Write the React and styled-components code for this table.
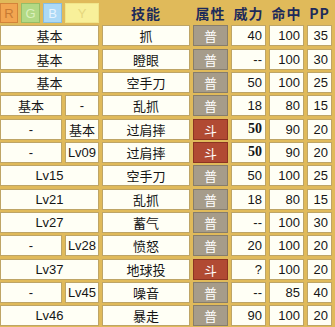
import React from 'react';
import styled, { createGlobalStyle } from 'styled-components';

const GlobalStyle = createGlobalStyle`
  html, body {
    margin: 0;
    padding: 0;
    background: #e0ba5a;
  }
  body {
    font-family: "Liberation Sans", "Noto Sans CJK SC", sans-serif;
  }
`;

const Sheet = styled.div`
  width: 335px;
  height: 327px;
  box-sizing: border-box;
  padding-top: 3px;
  background: #e0ba5a;
  display: grid;
  grid-template-columns: 18px 19px 19px 34px 88px 35px 35px 35px 25px;
  grid-template-rows: 20px repeat(13, 21px);
  column-gap: 3px;
  row-gap: 2.33px;
  overflow: hidden;
`;

const swatches = {
  R: { bg: '#f2a550', line: '#d3843a', ink: '#c77a34' },
  G: { bg: '#b2d985', line: '#95bd67', ink: '#dcf0bd' },
  B: { bg: '#acd9f6', line: '#86bde2', ink: '#e6f4ff' },
  Y: { bg: '#f8f09a', line: '#f0e58a', ink: '#e6d77e' }
};

const Swatch = styled.div`
  box-sizing: border-box;
  background: ${props => swatches[props.$tone].bg};
  border: 1px solid ${props => swatches[props.$tone].line};
  color: ${props => swatches[props.$tone].ink};
  font-size: 13px;
  display: flex;
  align-items: center;
  justify-content: center;
`;

const HeadLabel = styled.div`
  display: flex;
  align-items: center;
  justify-content: center;
  font-family: "Noto Sans CJK SC", sans-serif;
  font-weight: 700;
  font-size: 14px;
  color: #1d2b5a;
  letter-spacing: 1px;
`;

const Cell = styled.div`
  box-sizing: border-box;
  grid-column: ${props => props.$span || 'auto'};
  background: #fffff5;
  border: 1px solid #bea566;
  display: flex;
  align-items: center;
  justify-content: ${props => (props.$right ? 'flex-end' : 'center')};
  padding-right: ${props => (props.$right ? '3px' : '0')};
  font-family: ${props =>
    props.$bold
      ? '"Liberation Serif", serif'
      : '"Liberation Sans", "Noto Sans CJK SC", sans-serif'};
  font-weight: ${props => (props.$bold ? 700 : 400)};
  font-size: ${props => (props.$bold ? '14px' : '13px')};
  color: #151515;
  white-space: nowrap;
`;

const types = {
  普: { bg: '#a69c8a', line: '#877d6b' },
  斗: { bg: '#b14a33', line: '#8c3322' }
};

const TypeCell = styled.div`
  box-sizing: border-box;
  background: ${props => types[props.$kind].bg};
  border: 1px solid ${props => types[props.$kind].line};
  color: #fff;
  font-family: "Noto Sans CJK SC", sans-serif;
  font-size: 13px;
  display: flex;
  align-items: center;
  justify-content: center;
`;

const moves = [
  { lv: ['基本'], name: '抓', type: '普', pow: '40', acc: '100', pp: '35' },
  { lv: ['基本'], name: '瞪眼', type: '普', pow: '--', acc: '100', pp: '30' },
  { lv: ['基本'], name: '空手刀', type: '普', pow: '50', acc: '100', pp: '25' },
  { lv: ['基本', '-'], name: '乱抓', type: '普', pow: '18', acc: '80', pp: '15' },
  { lv: ['-', '基本'], name: '过肩摔', type: '斗', pow: '50', acc: '90', pp: '20', bold: true },
  { lv: ['-', 'Lv09'], name: '过肩摔', type: '斗', pow: '50', acc: '90', pp: '20', bold: true },
  { lv: ['Lv15'], name: '空手刀', type: '普', pow: '50', acc: '100', pp: '25' },
  { lv: ['Lv21'], name: '乱抓', type: '普', pow: '18', acc: '80', pp: '15' },
  { lv: ['Lv27'], name: '蓄气', type: '普', pow: '--', acc: '100', pp: '30' },
  { lv: ['-', 'Lv28'], name: '愤怒', type: '普', pow: '20', acc: '100', pp: '20' },
  { lv: ['Lv37'], name: '地球投', type: '斗', pow: '?', acc: '100', pp: '20' },
  { lv: ['-', 'Lv45'], name: '噪音', type: '普', pow: '--', acc: '85', pp: '40' },
  { lv: ['Lv46'], name: '暴走', type: '普', pow: '90', acc: '100', pp: '20' }
];

export default function App() {
  return (
    <>
      <GlobalStyle />
      <Sheet>
        {['R', 'G', 'B', 'Y'].map(t => (
          <Swatch key={t} $tone={t}>
            {t}
          </Swatch>
        ))}
        <HeadLabel>技能</HeadLabel>
        <HeadLabel>属性</HeadLabel>
        <HeadLabel>威力</HeadLabel>
        <HeadLabel>命中</HeadLabel>
        <HeadLabel>PP</HeadLabel>

        {moves.map((m, i) => (
          <React.Fragment key={i}>
            {m.lv.length === 1 ? (
              <Cell $span="1 / 5">{m.lv[0]}</Cell>
            ) : (
              <>
                <Cell $span="1 / 4">{m.lv[0]}</Cell>
                <Cell $span="4 / 5">{m.lv[1]}</Cell>
              </>
            )}
            <Cell>{m.name}</Cell>
            <TypeCell $kind={m.type}>{m.type}</TypeCell>
            <Cell $right $bold={m.bold}>
              {m.pow}
            </Cell>
            <Cell $right>{m.acc}</Cell>
            <Cell $right>{m.pp}</Cell>
          </React.Fragment>
        ))}
      </Sheet>
    </>
  );
}
